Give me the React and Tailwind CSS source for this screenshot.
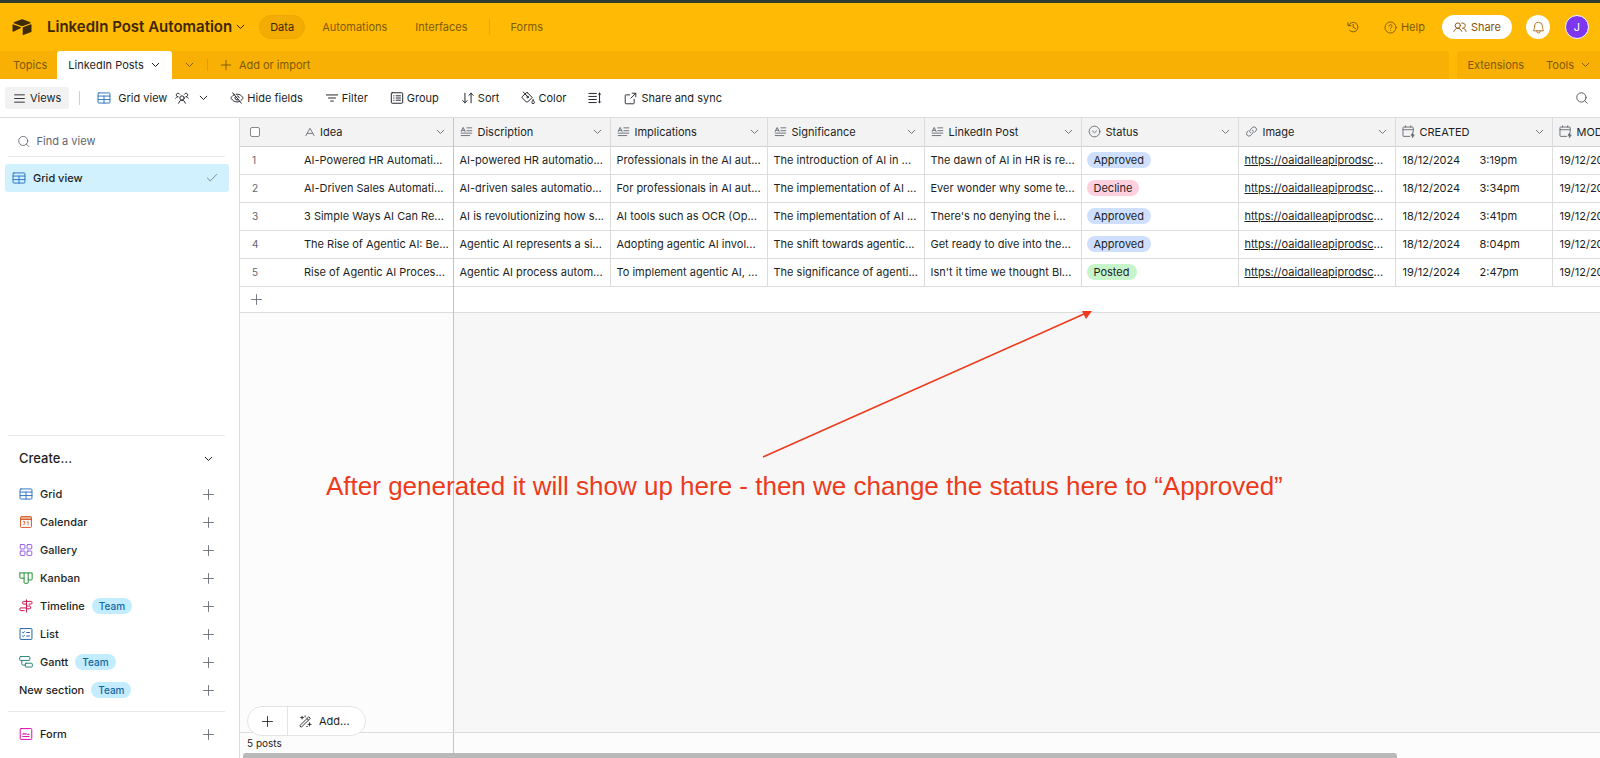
import { Search, Plus, Check } from "lucide-react";

const Icon = ({ size = 16, className = "", children, stroke = 1.1, ...rest }) => (
  <svg
    width={size}
    height={size}
    viewBox="0 0 16 16"
    fill="none"
    stroke="currentColor"
    strokeWidth={stroke}
    strokeLinecap="round"
    strokeLinejoin="round"
    className={`shrink-0 ${className}`}
    aria-hidden="true"
    {...rest}
  >
    {children}
  </svg>
);

const Caret = ({ className = "" }) => (
  <svg width="9" height="6" viewBox="0 0 9 6" fill="none" stroke="currentColor" strokeWidth="1" strokeLinecap="round" strokeLinejoin="round" className={`shrink-0 ${className}`} aria-hidden="true">
    <path d="M1.200 1.200l3.300 3.300 3.300-3.300" />
  </svg>
);

const GridIcon = (props) => (
  <Icon {...props}>
    <rect x="1.200" y="2.200" width="13.600" height="11.600" rx="1" />
    <path d="M1.200 5.800h13.600M1.200 9.800h13.600M8 5.800v8" />
  </Icon>
);

const CalendarIcon = (props) => (
  <Icon {...props}>
    <rect x="1.800" y="1.800" width="12.400" height="12.400" rx="1" />
    <path d="M1.800 5.200h12.400M1.800 3.500h12.400" />
    <path d="M5 7.600h2L6 9c1.400.1 1.200 2.300-1 1.800M9.200 8.200l1.200-.7v3.700" strokeWidth="0.9" />
  </Icon>
);

const GalleryIcon = (props) => (
  <Icon {...props}>
    <rect x="1.400" y="1.800" width="5.400" height="5" rx="0.8" />
    <rect x="9.200" y="1.800" width="5.400" height="5" rx="0.8" />
    <rect x="1.400" y="9.200" width="5.400" height="5" rx="0.8" />
    <rect x="9.200" y="9.200" width="5.400" height="5" rx="0.8" />
  </Icon>
);

const KanbanIcon = (props) => (
  <Icon {...props}>
    <path d="M1 2.200h14v7.200a.8.800 0 0 1-.8.8h-3.700v-8M10.500 10.200v3a.8.800 0 0 1-.8.8H6.600a.8.800 0 0 1-.8-.8v-11M5.800 8.200h-4a.8.800 0 0 1-.8-.8V2.200" />
  </Icon>
);

const TimelineIcon = (props) => (
  <Icon {...props}>
    <path d="M8.500 1v14M8.500 5.800H5a.8.800 0 0 1-.8-.8V3.500c0-.4.400-.8.800-.8h9c.4 0 .8.400.8.800V5c0 .4-.4.800-.8.800h-2.500M8.500 10.200H1.800a.8.800 0 0 0-.8.800v1.500c0 .4.400.8.800.8h4.200M8.500 8h4c.4 0 .8.400.8.800v1.600c0 .4-.4.800-.8.800h-4" />
  </Icon>
);

const ListIcon = (props) => (
  <Icon {...props}>
    <rect x="1.200" y="1.800" width="13.600" height="12.400" rx="1" />
    <path d="M4 6.200l.8.700 1.500-1.600M4 10.300l.8.700 1.500-1.600M8.800 6.300h3.200M8.800 10.300h3.200" />
  </Icon>
);

const GanttIcon = (props) => (
  <Icon {...props}>
    <rect x="0.800" y="1.800" width="11.600" height="4.400" rx="0.9" />
    <rect x="7.200" y="9.400" width="8" height="4.400" rx="0.9" />
    <path d="M3.200 6.200v3.900c0 .9.600 1.500 1.500 1.500h2.500" />
  </Icon>
);

const FormIcon = (props) => (
  <Icon {...props}>
    <rect x="1.400" y="1.800" width="13.200" height="12.400" rx="1" />
    <path d="M4.400 8.600c.6-2.300 1.800-2.300 1.500-.2.800-1.700 1.500-1.200 1.600 0 .8-.9 1.500-.7 1.900 0h2.200M4.400 10.900h7.200" />
  </Icon>
);

const PeopleIcon = (props) => (
  <Icon {...props}>
    <circle cx="8" cy="8" r="2.500" />
    <path d="M4.200 14c.6-2.200 1.900-3.500 3.800-3.500s3.200 1.300 3.800 3.500M.8 8.200c.6-1 1.400-1.600 2.600-1.600M15.200 8.200c-.6-1-1.400-1.600-2.600-1.600M3.200 6.500a2 2 0 1 1 2-2.900M12.800 6.500a2 2 0 1 0-2-2.900" />
  </Icon>
);

const HideIcon = (props) => (
  <Icon {...props}>
    <path d="M3 2l10 12M5 4C2.500 5.200 1 8 1 8s2.200 4.500 7 4.500c1.300 0 2.400-.3 3.400-.8M7 3.600c5.600-.7 8 4.400 8 4.400s-.7 1.400-2.200 2.600M6.300 6.200a2.500 2.500 0 0 0 3.300 3.700M8.500 5.500a2.500 2.500 0 0 1 2 2.200" />
  </Icon>
);

const FilterIcon = (props) => (
  <Icon {...props}>
    <path d="M1.500 4.500h13M4 8h8M6.500 11.500h3" />
  </Icon>
);

const GroupIcon = (props) => (
  <Icon {...props}>
    <rect x="1.500" y="2" width="13" height="12" rx="1" />
    <path d="M4.200 5.500h.4M7 5.500h5M4.200 8h.4M7 8h5M4.200 10.500h.4M7 10.500h5" />
  </Icon>
);

const SortIcon = (props) => (
  <Icon {...props}>
    <path d="M4.500 2.500v11M2 11l2.500 2.500L7 11M11.500 13.500v-11M9 5l2.500-2.500L14 5" />
  </Icon>
);

const ColorIcon = (props) => (
  <Icon {...props}>
    <path d="M2.400 1l3 3M7.200 1.800l5.600 5.600-5.200 5.200c-.4.400-1 .4-1.400 0L1.400 7.800c-.4-.4-.4-1 0-1.400l4.900-4.600c.3-.2.600-.2.900 0zM5.400 4l1.700 2.200" />
    <circle cx="7.600" cy="7" r="0.900" />
    <path d="M13.800 10.200s1.500 1.900 1.500 2.800a1.400 1.400 0 0 1-2.900 0c0-.9 1.400-2.800 1.400-2.800z" />
  </Icon>
);

const HeightIcon = (props) => (
  <Icon {...props}>
    <path d="M1 2.800h8.500M1 6.200h8.500M1 9.700h8.500M1 13.200h8.500M13.200 2.500v11M12 3.700l1.200-1.200 1.200 1.200M12 12.300l1.200 1.200 1.200-1.200" />
  </Icon>
);

const ShareOutIcon = (props) => (
  <Icon {...props}>
    <path d="M7 3.500H2.300a.8.800 0 0 0-.8.800v9.400c0 .4.400.8.800.8h9.400c.4 0 .8-.4.8-.8V9M10 1.500h4.500V6M14.500 1.500L8.500 7.500" />
  </Icon>
);

const HistoryIcon = (props) => (
  <Icon {...props}>
    <path d="M3 6.200A5.500 5.500 0 1 1 4.200 12M2.200 3v3.500h3.500M8.200 5v3.200l2.700 1.500" />
  </Icon>
);

const HelpIcon = (props) => (
  <Icon {...props}>
    <circle cx="8" cy="8" r="6.800" />
    <path d="M6.100 6.400a1.900 1.900 0 1 1 2.700 1.700c-.5.300-.8.500-.8 1.200M8 11.400v.1" />
  </Icon>
);

const ShareIcon = (props) => (
  <Icon {...props}>
    <circle cx="5.500" cy="6.400" r="3" />
    <path d="M1 13c.9-2.200 2.400-3.500 4.500-3.500S9.200 10.800 10 13M10 3.600a3 3 0 1 1 .8 5.800c2 0 3.400 1.200 4.200 3.600" />
  </Icon>
);

const BellIcon = (props) => (
  <Icon {...props}>
    <path d="M3.200 6.400a4.800 4.800 0 0 1 9.600 0c0 2.700.6 4 1.300 5 .2.300 0 .7-.4.700H2.300c-.4 0-.6-.4-.4-.7.700-1 1.300-2.300 1.300-5zM6 12.200v.6a2 2 0 0 0 4 0v-.6" />
  </Icon>
);

const TextIcon = (props) => (
  <Icon {...props}>
    <path d="M2.500 13L8 3l5.500 10M4.300 9.900h7.400" />
  </Icon>
);

const LongTextIcon = (props) => (
  <Icon {...props}>
    <path d="M1.500 8l2.400-5 2.400 5M2.300 6.500h3.200M8.500 3.500h6M8.500 7h6M1.500 10h13M1.500 13h10.500" />
  </Icon>
);

const SelectIcon = (props) => (
  <Icon {...props}>
    <circle cx="8" cy="8" r="6.600" />
    <path d="M5.400 7.200L8 9.600l2.600-2.400" />
  </Icon>
);

const LinkIcon = (props) => (
  <Icon {...props}>
    <path d="M6.700 9.900a3.100 3.100 0 0 1 0-4.400l2.600-2.600a3.100 3.100 0 0 1 4.300 4.300l-1.600 1.500M9.300 6.100a3.100 3.100 0 0 1 0 4.400l-2.600 2.600a3.100 3.100 0 0 1-4.300-4.300L4 7.300" />
  </Icon>
);

const DateIcon = (props) => (
  <Icon {...props}>
    <path d="M9.500 14H2a.8.800 0 0 1-.8-.8V3.300c0-.4.400-.8.800-.8h11c.4 0 .8.400.8.800V8M1.200 5.800h12.600M4.300 1v1.500M10.700 1v1.500" />
    <path d="M13.300 9.500l-2 3.200h1.500v2.800l2.200-3.300h-1.700z" fill="currentColor" />
  </Icon>
);

const WandIcon = (props) => (
  <Icon {...props}>
    <path d="M1.300 12.900L12 2.200l1.900 1.900L3.200 14.800zM9.800 4.400l1.900 1.900M3.800 1.500v3.400M2.100 3.200h3.400M7.500 1v1.400M13 9.500v4M11 11.500h4M9.500 14.200h.8" />
  </Icon>
);

const LogoIcon = () => (
  <svg width="20" height="17" viewBox="0 0 20 17" fill="currentColor" className="shrink-0" role="img" aria-label="Airtable">
    <path d="M9.100.5L1.900 3.300c-.4.200-.4.700 0 .9L9.200 7c.6.200 1.300.2 1.900 0l7.300-2.800c.4-.2.400-.7 0-.9L11.100.5c-.6-.3-1.400-.3-2 0z" />
    <path d="M10.700 8.700v6.900c0 .4.400.6.700.5l7.800-3c.2-.1.300-.3.300-.5V5.700c0-.3-.3-.6-.7-.5l-7.800 3c-.2.100-.3.300-.3.500z" />
    <path d="M8.900 9L1.300 12.700c-.3.200-.8-.1-.8-.4V5.900c0-.4.400-.7.800-.5L8.900 8.300c.3.200.3.500 0 .7z" />
  </svg>
);

const toolbar = [
  { label: "Hide fields", icon: HideIcon },
  { label: "Filter", icon: FilterIcon },
  { label: "Group", icon: GroupIcon },
  { label: "Sort", icon: SortIcon },
  { label: "Color", icon: ColorIcon },
];

const createItems = [
  { label: "Grid", icon: GridIcon, color: "text-[#2b74c4]" },
  { label: "Calendar", icon: CalendarIcon, color: "text-[#d9531e]" },
  { label: "Gallery", icon: GalleryIcon, color: "text-[#9257e8]" },
  { label: "Kanban", icon: KanbanIcon, color: "text-[#1c8a2c]" },
  { label: "Timeline", icon: TimelineIcon, color: "text-[#c4124a]", team: true },
  { label: "List", icon: ListIcon, color: "text-[#1f5fa8]" },
  { label: "Gantt", icon: GanttIcon, color: "text-[#1f8078]", team: true },
];

const columns = [
  { label: "Discription", icon: LongTextIcon },
  { label: "Implications", icon: LongTextIcon },
  { label: "Significance", icon: LongTextIcon },
  { label: "LinkedIn Post", icon: LongTextIcon },
  { label: "Status", icon: SelectIcon },
  { label: "Image", icon: LinkIcon },
  { label: "CREATED", icon: DateIcon },
  { label: "MODIFIED", icon: DateIcon },
];

const rows = [
  {
    idea: "AI-Powered HR Automati...",
    texts: ["AI-powered HR automatio...", "Professionals in the AI aut...", "The introduction of AI in ...", "The dawn of AI in HR is re..."],
    status: "Approved",
    date: "18/12/2024",
    time: "3:19pm",
  },
  {
    idea: "AI-Driven Sales Automati...",
    texts: ["AI-driven sales automatio...", "For professionals in AI aut...", "The implementation of AI ...", "Ever wonder why some te..."],
    status: "Decline",
    date: "18/12/2024",
    time: "3:34pm",
  },
  {
    idea: "3 Simple Ways AI Can Re...",
    texts: ["AI is revolutionizing how s...", "AI tools such as OCR (Op...", "The implementation of AI ...", "There's no denying the i..."],
    status: "Approved",
    date: "18/12/2024",
    time: "3:41pm",
  },
  {
    idea: "The Rise of Agentic AI: Be...",
    texts: ["Agentic AI represents a si...", "Adopting agentic AI invol...", "The shift towards agentic...", "Get ready to dive into the..."],
    status: "Approved",
    date: "18/12/2024",
    time: "8:04pm",
  },
  {
    idea: "Rise of Agentic AI Proces...",
    texts: ["Agentic AI process autom...", "To implement agentic AI, ...", "The significance of agenti...", "Isn't it time we thought Bl..."],
    status: "Posted",
    date: "19/12/2024",
    time: "2:47pm",
  },
];

const statusColors = {
  Approved: "bg-[#cfdfff]",
  Decline: "bg-[#ffcfdd]",
  Posted: "bg-[#c7f5cb]",
};

const TopBar = () => (
  <header className="flex h-12 items-center bg-[#ffba05] pl-3 pr-[11px] text-[11px] text-[#7d5a05]">
    <span className="text-[#3d2b05]">
      <LogoIcon />
    </span>
    <button className="ml-[15px] flex items-center gap-1 text-[15px] font-semibold text-[#3d2700]">
      LinkedIn Post Automation
      <Caret />
    </button>
    <nav className="ml-[14px] flex items-center">
      <a href="#data" className="rounded-full border border-[#eda800] bg-[#f3ac04] px-[10px] leading-[22px] text-[#3d2700]">Data</a>
      <a href="#automations" className="ml-[17px]">Automations</a>
      <a href="#interfaces" className="ml-7">Interfaces</a>
      <span className="ml-[21px] h-4 w-px bg-[#eda800]" />
      <a href="#forms" className="ml-[21px]">Forms</a>
    </nav>
    <div className="ml-auto flex items-center">
      <button aria-label="History">
        <HistoryIcon size={14} />
      </button>
      <button className="ml-6 flex items-center gap-1">
        <HelpIcon size={13} />
        Help
      </button>
      <button className="ml-[17px] flex h-6 items-center gap-1 rounded-full bg-white px-[11px] text-[#8a5208]">
        <ShareIcon size={14} />
        Share
      </button>
      <button aria-label="Notifications" className="ml-[14px] flex size-6 items-center justify-center rounded-full bg-white text-[#a8690a]">
        <BellIcon size={13} />
      </button>
      <button className="ml-[15px] flex size-6 items-center justify-center rounded-full border border-white bg-[#7c37ef] text-white">J</button>
    </div>
  </header>
);

const TabBar = () => (
  <div className="flex h-7 gap-2 bg-[#ffba05] text-[11px] text-[#7d5a05]">
    <div className="flex flex-1 items-center rounded-tr-[3px] bg-[#f8b005]">
      <a href="#topics" className="pl-[13px] pr-[10px]">Topics</a>
      <button className="flex h-full items-center gap-[7px] rounded-t-[3px] bg-white pl-[11px] pr-3 text-[#1d1f25]">
        LinkedIn Posts
        <Caret />
      </button>
      <button aria-label="All tables" className="ml-[13px]">
        <Caret />
      </button>
      <span className="ml-[13px] h-3 w-px bg-[#dd9d05]" />
      <button className="ml-[10px] flex items-center gap-[5px]">
        <Plus size={16} strokeWidth={1.4} />
        Add or import
      </button>
    </div>
    <div className="flex items-center rounded-tl-[3px] bg-[#f8b005] px-[10px]">
      <button>Extensions</button>
      <button className="ml-[22px] flex items-center gap-[7px]">
        Tools
        <Caret />
      </button>
    </div>
  </div>
);

const Toolbar = () => (
  <div className="flex h-[39px] items-center border-b border-[#dcdcdc] bg-white pl-[5px] pr-[11px] text-[11px] text-[#1d1f25]">
    <button className="flex h-[22px] items-center gap-1 rounded-[3px] bg-[#f2f2f2] px-2">
      <Icon size={13}>
        <path d="M2 3.500h12M2 8h12M2 12.500h12" />
      </Icon>
      Views
    </button>
    <span className="ml-[10px] h-[14px] w-px bg-[#d0d0d0]" />
    <button className="ml-[17px] flex items-center">
      <GridIcon size={14} className="text-[#2b74c4]" />
      <span className="ml-[7px]">Grid view</span>
      <PeopleIcon size={14} className="ml-2" />
      <Caret className="ml-[10px]" />
    </button>
    <div className="ml-[22px] flex items-center gap-[22px]">
      {toolbar.map(({ label, icon: ToolIcon }) => (
        <button key={label} className="flex items-center gap-[3px]">
          <ToolIcon size={14} />
          {label}
        </button>
      ))}
      <button aria-label="Row height">
        <HeightIcon size={14} />
      </button>
      <button className="flex items-center gap-1">
        <ShareOutIcon size={13} />
        Share and sync
      </button>
    </div>
    <button aria-label="Search" className="ml-auto text-[#555]">
      <Search size={14} strokeWidth={1.6} />
    </button>
  </div>
);

const TeamBadge = () => (
  <span className="rounded-full bg-[#c4ecff] px-[7px] text-[10px] leading-4 text-[#0f68a2]">Team</span>
);

const Sidebar = () => (
  <aside className="flex w-60 shrink-0 flex-col border-r border-[#dcdcdc] bg-white text-[11px] text-[#1d1f25]">
    <label className="ml-2 mr-[14px] mt-[7px] flex h-8 items-center gap-[6px] border-b border-[#e8e8e8] pl-[9px] pt-px text-[#616670]">
      <Search size={15} strokeWidth={1.5} />
      <input type="text" aria-label="Find a view" placeholder="Find a view" className="w-full bg-transparent outline-none placeholder:text-[#616670]" />
    </label>
    <button className="ml-[5px] mr-[10px] mt-[7px] flex h-7 items-center gap-[7px] rounded-[3px] bg-[#d1f1ff] pl-[7px] pr-[10px] font-medium">
      <GridIcon size={14} className="text-[#2b74c4]" />
      Grid view
      <Check size={14} strokeWidth={1.5} className="ml-auto text-[#5f7f8c]" />
    </button>

    <div className="ml-2 mr-[14px] mt-auto border-t border-[#e8e8e8] pb-[7px] pt-[9px]">
      <button className="flex h-7 w-full items-center justify-between pl-[11px] pr-3 text-[13px] font-medium">
        Create...
        <Caret />
      </button>
      <ul className="mt-[7px] font-medium">
        {createItems.map(({ label, icon: ItemIcon, color, team }) => (
          <li key={label}>
            <button className="flex h-7 w-full items-center pl-[11px] pr-2">
              <ItemIcon size={14} className={color} />
              <span className="ml-[7px] mr-[7px]">{label}</span>
              {team && <TeamBadge />}
              <Plus size={17} strokeWidth={1.2} className="ml-auto text-[#616670]" />
            </button>
          </li>
        ))}
        <li>
          <button className="flex h-7 w-full items-center pl-[11px] pr-2">
            <span className="mr-[7px]">New section</span>
            <TeamBadge />
            <Plus size={17} strokeWidth={1.2} className="ml-auto text-[#616670]" />
          </button>
        </li>
      </ul>
    </div>
    <div className="ml-2 mr-[14px] border-t border-[#e8e8e8] pb-[10px] pt-2 font-medium">
      <button className="flex h-7 w-full items-center pl-[11px] pr-2">
        <FormIcon size={14} className="text-[#dd04a8]" />
        <span className="ml-[7px]">Form</span>
        <Plus size={17} strokeWidth={1.2} className="ml-auto text-[#616670]" />
      </button>
    </div>
  </aside>
);

const DateCell = ({ date, time }) => (
  <div className="flex">
    <span className="w-[78px] pl-px">{date}</span>
    <span>{time}</span>
  </div>
);

const DataTable = () => (
  <table className="w-[1469px] table-fixed border-collapse bg-white text-[11px] text-[#1d1f25]">
    <colgroup>
      <col className="w-[58px]" />
      <col className="w-[155px]" />
      {columns.map((c) => (
        <col key={c.label} className="w-[157px]" />
      ))}
    </colgroup>
    <thead>
      <tr className="h-7 border-b border-[#d0d0d0] bg-[#f3f3f3] text-left">
        <th className="pl-[10px]">
          <input type="checkbox" aria-label="Select all rows" className="block size-[10px] appearance-none rounded-[2px] border border-[#888] bg-white" />
        </th>
        <th className="border-r border-[#c4c4c4] pl-[6px] pr-2 font-normal">
          <div className="flex items-center gap-1">
            <TextIcon size={12} className="text-[#616670]" />
            Idea
            <Caret className="ml-auto text-[#777]" />
          </div>
        </th>
        {columns.map(({ label, icon: FieldIcon }) => (
          <th key={label} className="border-r border-[#dcdcdc] pl-[6px] pr-2 font-normal">
            <div className="flex items-center gap-[5px]">
              <FieldIcon size={13} className="text-[#616670]" />
              {label}
              <Caret className="ml-auto text-[#777]" />
            </div>
          </th>
        ))}
      </tr>
    </thead>
    <tbody>
      {rows.map((row, i) => (
        <tr key={row.idea} className="h-7 whitespace-nowrap border-b border-[#dcdcdc]">
          <td className="pl-3 text-[10px] text-[#616670]">{i + 1}</td>
          <td className="border-r border-[#c4c4c4] pl-[6px]">{row.idea}</td>
          {row.texts.map((text) => (
            <td key={text} className="border-r border-[#dcdcdc] pl-[6px]">{text}</td>
          ))}
          <td className="border-r border-[#dcdcdc] pl-[5px]">
            <span className={`inline-block rounded-full px-[7px] leading-4 ${statusColors[row.status]}`}>{row.status}</span>
          </td>
          <td className="border-r border-[#dcdcdc] pl-[6px]">
            <a href="#image" className="underline">https://oaidalleapiprodsc</a>...
          </td>
          <td className="border-r border-[#dcdcdc] pl-[6px]">
            <DateCell date={row.date} time={row.time} />
          </td>
          <td className="pl-[6px]">
            <DateCell date="19/12/2024" time={row.time} />
          </td>
        </tr>
      ))}
      <tr className="h-[26px] border-b border-[#dcdcdc]">
        <td className="pl-2">
          <button aria-label="Add row" className="block text-[#616670]">
            <Plus size={17} strokeWidth={1.2} />
          </button>
        </td>
        <td className="border-r border-[#c4c4c4]" />
        <td colSpan={8} />
      </tr>
    </tbody>
  </table>
);

// Red note with an arrow that points at the Status column
const Annotation = () => (
  <div className="pointer-events-none absolute left-[86px] top-[192px] text-[#ee3a1c]">
    <svg width="346" height="160" viewBox="0 0 346 160" className="ml-[430px]" aria-hidden="true">
      <path d="M7 147L328 4" stroke="currentColor" strokeWidth="1.600" fill="none" />
      <path d="M336 1l-6 8-4-8z" fill="currentColor" />
    </svg>
    <p className="whitespace-nowrap font-['Liberation_Sans',sans-serif] text-[26px] leading-8">
      After generated it will show up here - then we change the status here to “Approved”
    </p>
  </div>
);

const GridView = () => (
  <main className="relative flex min-w-0 flex-1 flex-col overflow-hidden bg-[#f7f7f7]">
    <DataTable />
    <div className="flex flex-1">
      <div className="w-[214px] shrink-0 border-r border-[#c4c4c4] bg-[#fcfcfc]" />
    </div>
    <div className="absolute bottom-[22px] left-[7px] z-10 flex h-[30px] items-center rounded-full border border-[#e4e4e4] bg-white text-[11px] text-[#1d1f25]">
      <button aria-label="Add record" className="flex h-full w-10 items-center justify-center border-r border-[#e4e4e4]">
        <Plus size={17} strokeWidth={1.2} />
      </button>
      <button className="flex items-center gap-[7px] pl-[11px] pr-[15px]">
        <WandIcon size={13} />
        Add...
      </button>
    </div>
    <footer className="flex h-[26px] flex-col justify-between border-t border-[#dcdcdc] bg-[#fcfcfc] text-[10px] text-[#1d1f25]">
      <div className="h-5 w-[214px] border-r border-[#c4c4c4] pl-[7px] leading-5">5 posts</div>
      <div className="ml-[3px] mr-[203px] h-[6px] rounded-t-[3px] bg-[#b9b9b9]" />
    </footer>
    <Annotation />
  </main>
);

const App = () => {
  return (
    <div className="flex h-screen flex-col overflow-hidden border-t-[3px] border-[#2f3d30] bg-white font-['Inter',sans-serif]">
      <TopBar />
      <TabBar />
      <Toolbar />
      <div className="flex min-h-0 flex-1">
        <Sidebar />
        <GridView />
      </div>
    </div>
  );
};

export default App;
